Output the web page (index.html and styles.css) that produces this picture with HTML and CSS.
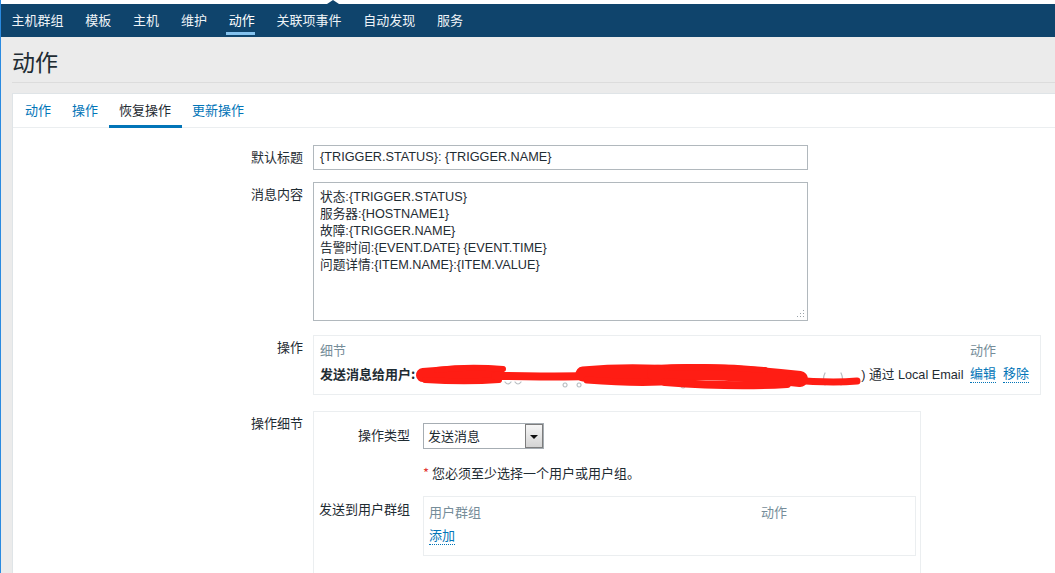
FILE: index.html
```html
<!DOCTYPE html>
<html lang="zh-CN">
<head>
<meta charset="utf-8">
<title>动作</title>
<link rel="stylesheet" href="styles.css">
</head>
<body>
<div class="page">
  <div class="topstrip"><span class="notch"></span></div>
  <nav class="topnav">
    <a class="nav-item">主机群组</a>
    <a class="nav-item">模板</a>
    <a class="nav-item">主机</a>
    <a class="nav-item">维护</a>
    <a class="nav-item active">动作</a>
    <a class="nav-item">关联项事件</a>
    <a class="nav-item">自动发现</a>
    <a class="nav-item">服务</a>
  </nav>
  <header class="pagehead"><h1>动作</h1></header>
  <div class="panel">
    <ul class="tabs">
      <li class="tab">动作</li>
      <li class="tab">操作</li>
      <li class="tab active">恢复操作</li>
      <li class="tab">更新操作</li>
    </ul>
    <div class="form">
      <div class="row row-subject">
        <label class="lbl">默认标题</label>
        <div class="field"><div class="input wide">{TRIGGER.STATUS}: {TRIGGER.NAME}</div></div>
      </div>
      <div class="row row-message">
        <label class="lbl">消息内容</label>
        <div class="field">
          <div class="textarea wide">
            <div>状态:{TRIGGER.STATUS}</div>
            <div>服务器:{HOSTNAME1}</div>
            <div>故障:{TRIGGER.NAME}</div>
            <div>告警时间:{EVENT.DATE} {EVENT.TIME}</div>
            <div>问题详情:{ITEM.NAME}:{ITEM.VALUE}</div>
            <svg class="grip" width="9" height="9" viewBox="0 0 9 9"><g fill="#9aa3a9"><rect x="7" y="1" width="1" height="1"/><rect x="4" y="4" width="1" height="1"/><rect x="7" y="4" width="1" height="1"/><rect x="1" y="7" width="1" height="1"/><rect x="4" y="7" width="1" height="1"/><rect x="7" y="7" width="1" height="1"/></g></svg>
          </div>
        </div>
      </div>
      <div class="row row-ops">
        <label class="lbl">操作</label>
        <div class="field">
          <div class="box ops">
            <div class="ops-grid">
              <div class="th">细节</div>
              <div class="th">动作</div>
              <div class="td detail"><b>发送消息给用户:</b><svg class="scribble" width="446" height="30" viewBox="0 0 446 30"><g fill="none" stroke-linecap="round" stroke-linejoin="round"><g stroke="#b9bfc3" stroke-width="1.2"><path d="M90 21 q3 4 6 0 M100 21 q3 4 6 0"/><path d="M150 22 a2 2 0 1 0 0.1 0 M164 22 a2 2 0 1 0 0.1 0"/><path d="M268 23 a2 2 0 1 0 0.1 0"/><path d="M410 12 q-3 6 0 12 M426 12 q3 6 0 12"/></g><g stroke="#ff1d14"><path d="M8 14 C 30 12, 55 11, 82 12" stroke-width="14"/><path d="M22 9 C 45 6, 65 6, 88 8" stroke-width="6"/><path d="M10 19 C 40 21, 60 21, 84 19" stroke-width="6"/><path d="M80 15 C 110 15, 140 16, 172 15" stroke-width="8"/><path d="M168 13 C 200 10, 235 10, 268 13" stroke-width="15"/><path d="M172 19 C 210 22, 240 22, 262 20" stroke-width="7"/><path d="M240 12 C 290 9, 340 13, 385 18" stroke-width="16"/><path d="M250 21 C 300 25, 340 25, 372 23" stroke-width="8"/><path d="M252 7 C 290 5, 320 6, 350 9" stroke-width="6"/><path d="M375 19 C 400 21, 420 22, 442 20" stroke-width="7"/></g></g></svg><span>)&nbsp;通过 Local Email</span></div>
              <div class="td act"><a class="link">编辑</a><a class="link">移除</a></div>
            </div>
          </div>
        </div>
      </div>
      <div class="row row-details">
        <label class="lbl">操作细节</label>
        <div class="field">
          <div class="box details">
            <div class="sub-row sub-type">
              <label class="sublbl">操作类型</label>
              <div class="select"><span class="select-text">发送消息</span><span class="select-btn"><span class="arrow"></span></span></div>
            </div>
            <div class="sub-row sub-note">
              <span class="sublbl"></span>
              <div class="note"><span class="req">*</span> 您必须至少选择一个用户或用户组。</div>
            </div>
            <div class="sub-row sub-groups">
              <label class="sublbl">发送到用户群组</label>
              <div class="box groups">
                <div class="groups-grid">
                  <div class="th">用户群组</div>
                  <div class="th">动作</div>
                  <div class="td"><a class="link">添加</a></div>
                  <div class="td"></div>
                </div>
              </div>
            </div>
          </div>
        </div>
      </div>
    </div>
  </div>
</div>
</body>
</html>
```

FILE: styles.css
```css
html, body {
  margin: 0;
  padding: 0;
  overflow: hidden;
}
body {
  font-family: "Liberation Sans", Arial, "Noto Sans CJK SC", sans-serif;
  font-size: 12.7px;
  color: #1f2c33;
  background: #ebebeb;
}
.page {
  border-left: 1px solid #2a8ae0;
  min-height: 573px;
  background: #ebebeb;
}
.topstrip {
  position: relative;
  height: 4px;
  background: #ffffff;
}
.notch {
  position: absolute;
  left: 326px;
  top: 0;
  width: 0;
  height: 0;
  border-left: 6px solid transparent;
  border-right: 6px solid transparent;
  border-bottom: 4px solid #0f446c;
}
.topnav {
  display: flex;
  height: 33px;
  background: #0f446c;
}
.nav-item {
  position: relative;
  display: block;
  padding: 0 10.9px;
  line-height: 32px;
  font-size: 13px;
  color: #eef3f7;
  font-family: "Noto Sans CJK SC", sans-serif;
}
.nav-item:first-child {
  padding-left: 10.5px;
}
.nav-item.active {
  color: #ffffff;
}
.nav-item.active::after {
  content: "";
  position: absolute;
  left: 8px;
  right: 11px;
  bottom: 2px;
  height: 3px;
  background: #84c2ee;
}
.pagehead {
  margin-left: 11px;
  height: 45px;
  border-bottom: 1px solid #dcdcdc;
  display: flex;
  align-items: center;
}
.pagehead h1 {
  margin: 0;
  padding-top: 3px;
  font-family: "Noto Sans CJK SC", sans-serif;
  font-size: 23px;
  font-weight: 400;
  color: #1f2c33;
  line-height: 30px;
}
.panel {
  margin-top: 10px;
  margin-left: 11px;
  background: #ffffff;
  border-top: 1px solid #dfe4e7;
  border-left: 1px solid #dfe4e7;
  min-height: 480px;
}
.tabs {
  list-style: none;
  margin: 0;
  padding: 0 0 0 2px;
  display: flex;
  height: 33px;
  border-bottom: 1px solid #ebeef0;
}
.tab {
  position: relative;
  padding: 0 10.5px;
  line-height: 31px;
  font-size: 13px;
  color: #0275b8;
  font-family: "Noto Sans CJK SC", sans-serif;
}
.tab:first-child {
  padding-left: 10px;
}
.tab.active {
  color: #1f2c33;
}
.tab.active::after {
  content: "";
  position: absolute;
  left: 0;
  right: 0;
  bottom: -1px;
  height: 3px;
  background: #0275b8;
}
.form {
  padding-top: 17px;
}
.row {
  display: flex;
  align-items: flex-start;
}
.row-subject { margin-bottom: 12px; }
.row-message { margin-bottom: 14px; }
.row-ops { margin-bottom: 16px; }
.lbl {
  flex: 0 0 290px;
  text-align: right;
  padding-top: 4px;
  line-height: 16px;
  font-size: 13px;
  font-family: "Noto Sans CJK SC", sans-serif;
  color: #1f2c33;
}
.field {
  margin-left: 10px;
}
.input {
  box-sizing: border-box;
  height: 25px;
  border: 1px solid #b1b8bd;
  padding: 0 6px;
  line-height: 23px;
}
.wide {
  width: 495px;
}
.textarea {
  position: relative;
  box-sizing: border-box;
  height: 139px;
  border: 1px solid #b1b8bd;
  padding: 6px 6px;
  line-height: 17px;
}
.grip {
  position: absolute;
  right: 2px;
  bottom: 2px;
}
.box {
  box-sizing: border-box;
  border: 1px solid #ebeef0;
}
.ops {
  width: 728px;
  padding: 4px 6px 6px 6px;
}
.ops-grid {
  display: grid;
  grid-template-columns: 1fr 64px;
}
.th {
  height: 20px;
  line-height: 20px;
  font-size: 13px;
  color: #768d99;
  font-family: "Noto Sans CJK SC", sans-serif;
}
.td {
  height: 28px;
  line-height: 28px;
  white-space: nowrap;
}
.detail b {
  font-weight: 700;
  font-size: 13px;
  font-family: "Noto Sans CJK SC", sans-serif;
}
.scribble {
  display: inline-block;
  vertical-align: middle;
  margin: -8px 0 -8px 0;
}
.link {
  color: #0275b8;
  border-bottom: 1px dotted #0275b8;
  font-family: "Noto Sans CJK SC", sans-serif;
  font-size: 13px;
  line-height: 16px;
  margin-right: 7px;
}
.details {
  width: 608px;
  padding: 11px 0 40px 0;
}
.sub-row {
  display: flex;
  align-items: flex-start;
}
.sublbl {
  flex: 0 0 96px;
  text-align: right;
  font-size: 13px;
  line-height: 16px;
  padding-top: 4px;
  font-family: "Noto Sans CJK SC", sans-serif;
}
.sub-row > :nth-child(2) {
  margin-left: 13px;
}
.sub-note {
  margin-top: 16px;
  margin-bottom: 15px;
}
.select {
  box-sizing: border-box;
  display: flex;
  width: 121px;
  height: 26px;
  border: 1px solid #a6adb3;
  background: #fff;
}
.select-text {
  flex: 1;
  padding-left: 4px;
  line-height: 24px;
  font-size: 13px;
  font-family: "Noto Sans CJK SC", sans-serif;
}
.select-btn {
  box-sizing: border-box;
  width: 18px;
  height: 24px;
  border: 1px solid #7d7d7d;
  background: linear-gradient(#f6f6f6, #d4d4d4);
  display: flex;
  align-items: center;
  justify-content: center;
}
.arrow {
  width: 0;
  height: 0;
  border-left: 4px solid transparent;
  border-right: 4px solid transparent;
  border-top: 4px solid #111;
  margin-top: 1px;
}
.note {
  line-height: 16px;
  font-size: 13px;
  font-family: "Noto Sans CJK SC", sans-serif;
}
.req {
  color: #e33734;
}
.sub-groups .sublbl {
  padding-top: 5px;
}
.groups {
  width: 493px;
  height: 60px;
  padding: 5px 4px 5px 5px;
}
.groups-grid {
  display: grid;
  grid-template-columns: 332px 1fr;
}
```
